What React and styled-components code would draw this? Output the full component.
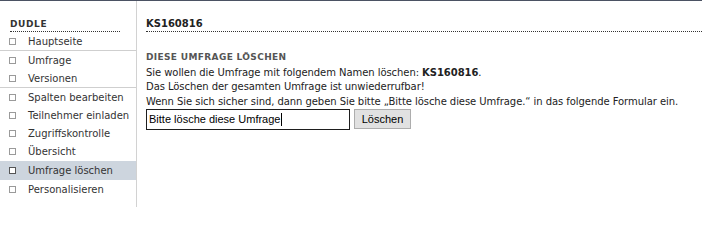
import React from "react";
import styled, { createGlobalStyle, css } from "styled-components";

const GlobalStyle = createGlobalStyle`
  html, body { margin: 0; padding: 0; background: #fff; }
  body {
    font-family: "DejaVu Sans", Verdana, sans-serif;
    font-size: 10px;
    color: #222;
  }
`;

const Page = styled.div`
  display: flex;
  height: 206px;
  border-top: 1px solid #4b5263;
`;

const Sidebar = styled.nav`
  width: 136px;
  flex-shrink: 0;
  border-right: 1px solid #d2d2d2;
`;

const SideHeader = styled.div`
  margin: 16px 16px 0 10px;
  line-height: 14px;
  border-bottom: 1px dotted #333;
  font-weight: bold;
  font-size: 9px;
  letter-spacing: 0.6px;
  color: #333;
  text-transform: uppercase;
`;

const MenuGroup = styled.ul`
  list-style: none;
  margin: 0;
  padding: 0;
  border-bottom: ${(p) => (p.$last ? "none" : "1px solid #cfcfcf")};
`;

const MenuItem = styled.li`
  display: flex;
  align-items: center;
  height: 18px;
  padding-left: 9px;
  color: #333;
  ${(p) =>
    p.$active &&
    css`
      height: 19px;
      margin-top: 1px;
      background: #cdd5de;
    `}
`;

const Box = styled.span`
  width: 5px;
  height: 5px;
  border: 1px solid ${(p) => (p.$active ? "#555" : "#9a9a9a")};
  background: #fff;
  margin-right: 12px;
  flex-shrink: 0;
`;

const Main = styled.main`
  flex: 1;
  padding-left: 9px;
`;

const MainHeader = styled.h1`
  margin: 16px 0 0 0;
  font-size: 10px;
  line-height: 14px;
  font-weight: bold;
  color: #222;
  border-bottom: 1px dotted #333;
`;

const SectionTitle = styled.h2`
  margin: 18px 0 0 0;
  font-size: 9px;
  line-height: 14px;
  font-weight: bold;
  letter-spacing: 0.35px;
  color: #555;
  text-transform: uppercase;
`;

const Text = styled.p`
  margin: 2px 0 0 0;
  line-height: 14.3px;
  letter-spacing: -0.06px;
  color: #222;
`;

const Form = styled.div`
  display: flex;
  align-items: center;
  gap: 4px;
`;

const TextField = styled.div`
  box-sizing: border-box;
  width: 204px;
  height: 21px;
  border: 1px solid #1e1e1e;
  padding: 0 2px;
  display: flex;
  align-items: center;
  font-family: "Liberation Sans", Arial, sans-serif;
  font-size: 11px;
  color: #000;
`;

const Caret = styled.span`
  display: inline-block;
  width: 1px;
  height: 13px;
  background: #000;
  margin-left: 1px;
`;

const Button = styled.button`
  box-sizing: border-box;
  width: 57px;
  height: 20px;
  border: 1px solid #adadad;
  background: #e1e1e1;
  font-family: "Liberation Sans", Arial, sans-serif;
  font-size: 11px;
  color: #000;
  padding: 0;
`;

const groups = [
  [{ label: "Hauptseite" }],
  [{ label: "Umfrage" }, { label: "Versionen" }],
  [
    { label: "Spalten bearbeiten" },
    { label: "Teilnehmer einladen" },
    { label: "Zugriffskontrolle" },
    { label: "Übersicht" },
    { label: "Umfrage löschen", active: true },
    { label: "Personalisieren" },
  ],
];

export default function App() {
  return (
    <>
      <GlobalStyle />
      <Page>
        <Sidebar>
          <SideHeader>Dudle</SideHeader>
          {groups.map((g, gi) => (
            <MenuGroup key={gi} $last={gi === groups.length - 1}>
              {g.map((it) => (
                <MenuItem key={it.label} $active={it.active}>
                  <Box $active={it.active} />
                  {it.label}
                </MenuItem>
              ))}
            </MenuGroup>
          ))}
        </Sidebar>
        <Main>
          <MainHeader>KS160816</MainHeader>
          <SectionTitle>Diese Umfrage löschen</SectionTitle>
          <Text>
            Sie wollen die Umfrage mit folgendem Namen löschen: <b>KS160816</b>.
            <br />
            Das Löschen der gesamten Umfrage ist unwiederrufbar!
            <br />
            Wenn Sie sich sicher sind, dann geben Sie bitte „Bitte lösche diese Umfrage.“ in das folgende Formular ein.
          </Text>
          <Form>
            <TextField role="textbox">
              Bitte lösche diese Umfrage
              <Caret />
            </TextField>
            <Button>Löschen</Button>
          </Form>
        </Main>
      </Page>
    </>
  );
}
